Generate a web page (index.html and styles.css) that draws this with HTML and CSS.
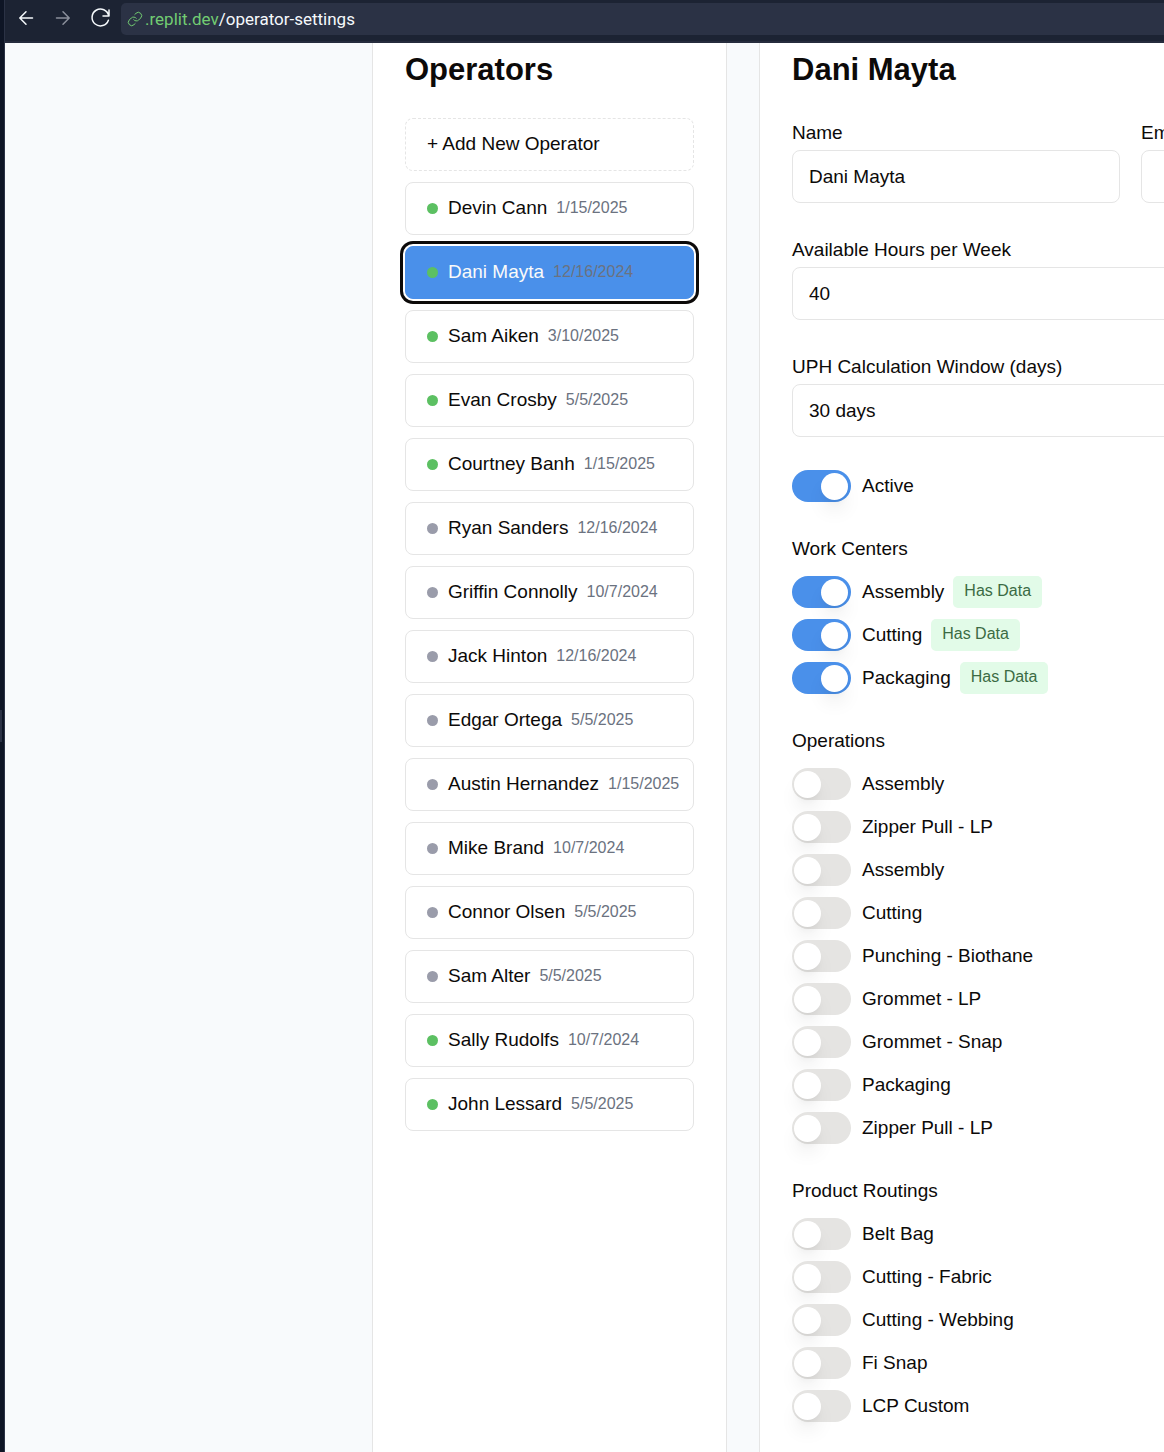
FILE: index.html
```html
<!DOCTYPE html>
<html lang="en">
<head>
<meta charset="utf-8">
<meta name="viewport" content="width=device-width, initial-scale=1">
<title>Operator Settings</title>
<link rel="stylesheet" href="styles.css">
</head>
<body>
<div class="workspace">
  <div class="gutter"><span class="gutter-handle"></span></div>
  <div class="webview">
    <header class="toolbar">
      <nav class="nav-buttons" aria-label="History">
        <button class="nav-button" type="button" aria-label="Back">
          <svg width="22" height="22" viewBox="0 0 22 22"><path d="M17.500 11H5M11 4.800 4.800 11l6.200 6.200"/></svg>
        </button>
        <button class="nav-button nav-button-muted" type="button" aria-label="Forward">
          <svg width="22" height="22" viewBox="0 0 22 22"><path d="M4.500 11H17M11 4.800l6.200 6.200-6.200 6.200"/></svg>
        </button>
        <button class="nav-button" type="button" aria-label="Reload">
          <svg width="22" height="22" viewBox="0 0 22 22"><path d="M20 3v6h-6M19.700 8.800A8.400 8.400 0 1 0 19.400 13.200"/></svg>
        </button>
      </nav>
      <div class="address">
        <svg class="link-icon" width="16" height="16" viewBox="0 0 24 24"><path d="M10 13a5 5 0 0 0 7.540.54l3-3a5 5 0 0 0-7.070-7.070l-1.720 1.710M14 11a5 5 0 0 0-7.540-.54l-3 3a5 5 0 0 0 7.070 7.070l1.710-1.710"/></svg>
        <span class="address-text"><span class="host">.replit.dev</span>/operator-settings</span>
      </div>
    </header>
    <main class="page">
      <section class="panel operators">
        <h2 class="panel-title">Operators</h2>
        <div class="operator-list">
          <button type="button" class="operator operator-new">+ Add New Operator</button>
          <button type="button" class="operator"><span class="dot dot-on"></span>Devin Cann<span class="date">1/15/2025</span></button>
          <button type="button" class="operator operator-selected"><span class="dot dot-on"></span>Dani Mayta<span class="date">12/16/2024</span></button>
          <button type="button" class="operator"><span class="dot dot-on"></span>Sam Aiken<span class="date">3/10/2025</span></button>
          <button type="button" class="operator"><span class="dot dot-on"></span>Evan Crosby<span class="date">5/5/2025</span></button>
          <button type="button" class="operator"><span class="dot dot-on"></span>Courtney Banh<span class="date">1/15/2025</span></button>
          <button type="button" class="operator"><span class="dot"></span>Ryan Sanders<span class="date">12/16/2024</span></button>
          <button type="button" class="operator"><span class="dot"></span>Griffin Connolly<span class="date">10/7/2024</span></button>
          <button type="button" class="operator"><span class="dot"></span>Jack Hinton<span class="date">12/16/2024</span></button>
          <button type="button" class="operator"><span class="dot"></span>Edgar Ortega<span class="date">5/5/2025</span></button>
          <button type="button" class="operator"><span class="dot"></span>Austin Hernandez<span class="date">1/15/2025</span></button>
          <button type="button" class="operator"><span class="dot"></span>Mike Brand<span class="date">10/7/2024</span></button>
          <button type="button" class="operator"><span class="dot"></span>Connor Olsen<span class="date">5/5/2025</span></button>
          <button type="button" class="operator"><span class="dot"></span>Sam Alter<span class="date">5/5/2025</span></button>
          <button type="button" class="operator"><span class="dot dot-on"></span>Sally Rudolfs<span class="date">10/7/2024</span></button>
          <button type="button" class="operator"><span class="dot dot-on"></span>John Lessard<span class="date">5/5/2025</span></button>
        </div>
      </section>
      <section class="panel details">
        <h2 class="panel-title">Dani Mayta</h2>
        <form class="form">
          <div class="field-row">
            <div class="field"><label for="name">Name</label><input class="control" id="name" type="text" value="Dani Mayta"></div>
            <div class="field"><label for="email">Email</label><input class="control" id="email" type="email"></div>
          </div>
          <div class="field"><label for="hours">Available Hours per Week</label><input class="control" id="hours" type="text" inputmode="numeric" value="40"></div>
          <div class="field"><label for="window">UPH Calculation Window (days)</label><select class="control" id="window"><option>30 days</option></select></div>
          <label class="toggle"><input class="switch" type="checkbox" checked>Active</label>
          <div class="group" role="group" aria-labelledby="centers">
            <h3 class="group-title" id="centers">Work Centers</h3>
            <div class="toggles">
              <label class="toggle"><input class="switch" type="checkbox" checked>Assembly<span class="badge">Has Data</span></label>
              <label class="toggle"><input class="switch" type="checkbox" checked>Cutting<span class="badge">Has Data</span></label>
              <label class="toggle"><input class="switch" type="checkbox" checked>Packaging<span class="badge">Has Data</span></label>
            </div>
          </div>
          <div class="group" role="group" aria-labelledby="operations">
            <h3 class="group-title" id="operations">Operations</h3>
            <div class="toggles">
              <label class="toggle"><input class="switch" type="checkbox">Assembly</label>
              <label class="toggle"><input class="switch" type="checkbox">Zipper Pull - LP</label>
              <label class="toggle"><input class="switch" type="checkbox">Assembly</label>
              <label class="toggle"><input class="switch" type="checkbox">Cutting</label>
              <label class="toggle"><input class="switch" type="checkbox">Punching - Biothane</label>
              <label class="toggle"><input class="switch" type="checkbox">Grommet - LP</label>
              <label class="toggle"><input class="switch" type="checkbox">Grommet - Snap</label>
              <label class="toggle"><input class="switch" type="checkbox">Packaging</label>
              <label class="toggle"><input class="switch" type="checkbox">Zipper Pull - LP</label>
            </div>
          </div>
          <div class="group" role="group" aria-labelledby="routings">
            <h3 class="group-title" id="routings">Product Routings</h3>
            <div class="toggles">
              <label class="toggle"><input class="switch" type="checkbox">Belt Bag</label>
              <label class="toggle"><input class="switch" type="checkbox">Cutting - Fabric</label>
              <label class="toggle"><input class="switch" type="checkbox">Cutting - Webbing</label>
              <label class="toggle"><input class="switch" type="checkbox">Fi Snap</label>
              <label class="toggle"><input class="switch" type="checkbox">LCP Custom</label>
            </div>
          </div>
        </form>
      </section>
    </main>
  </div>
</div>
</body>
</html>
```
FILE: styles.css
```css
:root {
  --ink: #0c0a09;
  --line: #e5e5e5;
  --blue: #4a90ea;
  --shell: #1c2333;
  --shell-light: #2b3245;
}

* {
  box-sizing: border-box;
}

body {
  margin: 0;
  overflow-x: hidden;
  color: var(--ink);
  font: 19px/28px "Liberation Sans", Arial, sans-serif;
}

button,
input,
select {
  font: inherit;
  color: inherit;
}

.workspace {
  display: flex;
  min-height: 100vh;
}

/* Dark splitter beside the web view */
.gutter {
  display: flex;
  flex: 0 0 5px;
  align-items: center;
  background: #0e1525;
  border-right: 1px solid var(--shell-light);
}

.gutter-handle {
  width: 2px;
  height: 32px;
  background: var(--shell-light);
}

.webview {
  display: flex;
  flex: 1;
  flex-direction: column;
  min-width: 0;
}

.toolbar {
  display: flex;
  align-items: flex-start;
  height: 43px;
  padding-top: 3px;
  background: var(--shell);
  border-bottom: 2px solid #262c3d;
}

.nav-buttons {
  display: flex;
  gap: 15px;
  padding: 4px 10px;
}

.nav-button {
  display: flex;
  padding: 0;
  color: #f5f9fc;
  background: none;
  border: 0;
}

.nav-button-muted {
  color: #8b909c;
}

.toolbar svg {
  fill: none;
  stroke: currentColor;
  stroke-width: 1.5;
  stroke-linecap: round;
  stroke-linejoin: round;
}

.address {
  display: flex;
  flex: 1;
  align-items: center;
  height: 32px;
  padding-left: 6px;
  color: #f5f9fc;
  font: 17px/24px Roboto, sans-serif;
  background: var(--shell-light);
  border-radius: 5px 0 0 5px;
}

.address-text {
  padding-left: 2px;
}

.host,
.link-icon {
  color: #72cc72;
}

.page {
  display: flex;
  flex: 1;
  gap: 32px;
  padding-left: 367px;
  overflow: hidden;
  background: #f8fafc;
}

.panel {
  flex-shrink: 0;
  padding: 11px 32px 30px;
  background: #fff;
  border: 1px solid var(--line);
  border-width: 0 1px;
}

.operators {
  width: 355px;
}

.details {
  width: 743px;
}

.panel-title {
  margin: 0;
  font-size: 31px;
  line-height: 32px;
}

.operator-list {
  display: flex;
  flex-direction: column;
  gap: 11px;
  margin-top: 32px;
}

.operator {
  display: flex;
  align-items: center;
  height: 53px;
  padding: 0 10px 2px 21px;
  text-align: left;
  white-space: nowrap;
  background: #fff;
  border: 1px solid var(--line);
  border-radius: 8px;
}

.operator-new {
  border-style: dashed;
}

.operator-selected {
  color: #fafaf9;
  background: var(--blue);
  border-color: var(--blue);
  box-shadow: 0 0 0 2px #fff, 0 0 0 5px var(--ink);
}

.dot {
  width: 11px;
  height: 11px;
  margin: 2px 10px 0 0;
  background: #9a9caa;
  border-radius: 50%;
}

.dot-on {
  background: #5cc062;
}

.date {
  margin-left: 9px;
  color: #6b7280;
  font-size: 16px;
}

.form {
  display: flex;
  flex-direction: column;
  gap: 33px;
  margin-top: 33px;
}

.field-row {
  display: grid;
  grid-template-columns: 1fr 1fr;
  gap: 21px;
}

.field {
  display: flex;
  flex-direction: column;
  gap: 3px;
}

.control {
  width: 100%;
  height: 53px;
  padding: 0 16px;
  background: #fff;
  border: 1px solid var(--line);
  border-radius: 8px;
  appearance: none;
}

.group-title {
  margin: 0 0 13px;
  font-size: inherit;
  font-weight: 400;
}

.toggles {
  display: flex;
  flex-direction: column;
  gap: 11px;
}

.toggle {
  display: flex;
  align-items: center;
  height: 32px;
}

.switch {
  display: flex;
  align-items: center;
  width: 59px;
  height: 32px;
  margin: 0 11px 0 0;
  padding: 0 3px 0 2px;
  background: #e5e4e2;
  border-radius: 16px;
  appearance: none;
}

.switch::before {
  width: 27px;
  height: 27px;
  background: #fff;
  border-radius: 50%;
  box-shadow: 0 13px 20px -4px rgb(0 0 0 / 10%), 0 5px 8px -5px rgb(0 0 0 / 10%);
  content: "";
}

.switch:checked {
  justify-content: flex-end;
  background: var(--blue);
}

.badge {
  height: 32px;
  margin-left: 9px;
  padding: 0 11px;
  color: #3b6b44;
  font-size: 16px;
  line-height: 30px;
  background: #e2fbe8;
  border-radius: 5px;
}
```
